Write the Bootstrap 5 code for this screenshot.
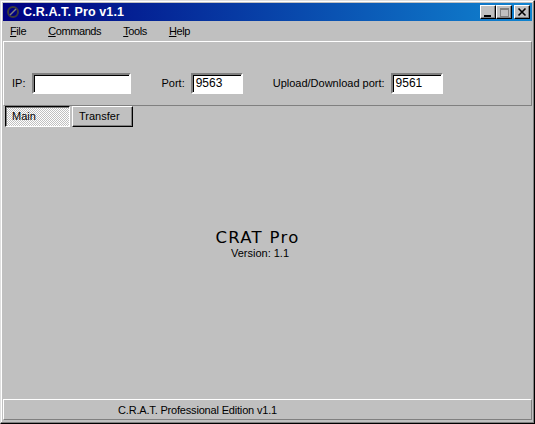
<!DOCTYPE html>
<html lang="en">
<head>
    <meta charset="UTF-8">
    <meta name="viewport" content="width=device-width, initial-scale=1.0">
    <title>C.R.A.T. Pro v1.1</title>
    <link href="https://cdn.jsdelivr.net/npm/bootstrap@5.3.2/dist/css/bootstrap.min.css" rel="stylesheet">
    <style>
        html, body { height: 100%; overflow: hidden; }
        body { background: #c0c0c0; font-family: "Liberation Sans", Arial, sans-serif; font-size: 11px; line-height: 13px; color: #000; }
        .win-frame { width: 535px; height: 424px; padding: 2px 2px 3px 2px; border-style: solid; border-width: 1px; border-color: #dfdfdf #000 #000 #dfdfdf; box-shadow: inset -1px -1px 0 #808080, inset 1px 1px 0 #fff; }
        .win-title { height: 18px; padding-left: 3px; padding-right: 2px; background: linear-gradient(90deg, #000080, #1084d0); color: #fff; font-size: 12.5px; font-weight: 700; letter-spacing: .1px; }
        .win-title svg { margin-right: 3px; }
        .cap-btn { width: 16px; height: 14px; padding: 0; background: #c0c0c0; border: 1px solid; border-color: #fff #000 #000 #fff; box-shadow: inset -1px -1px 0 #808080; }
        .cap-btn svg { display: block; margin: 0 auto; }
        .cap-gap { margin-left: 2px; }
        .menu-row { height: 20px; padding-left: 7px; gap: 22px; font-size: 11px; letter-spacing: -.4px; }
        .menu-row u { text-underline-offset: 1px; }
        .menu-item { padding-top: 1px; }
        .conn-panel { height: 65px; padding: 31px 0 0 8px; border: 1px solid; border-color: #fff #808080 #808080 #fff; font-size: 11px; }
        .field-box { height: 21px; padding: 1px 0 0 3px; background: #fff; border: 2px solid; border-color: #808080 #fff #fff #808080; box-shadow: inset 1px 1px 0 #000; font-size: 12px; line-height: 15px; }
        .box-ip { width: 99px; margin-left: 7px; margin-right: 30px; }
        .box-port { width: 52px; margin-left: 6px; margin-right: 30px; }
        .box-up { width: 52px; margin-left: 6px; }
        .tab-row { height: 22px; padding-left: 2px; gap: 2px; font-size: 11px; }
        .tab-btn { height: 21px; padding: 3px 0 0 6px; border: 1px solid; border-color: #fff #000 #000 #fff; box-shadow: inset -1px -1px 0 #808080; }
        .tab-on { width: 65px; border-color: #000 #fff #fff #000; box-shadow: inset 1px 1px 0 #808080; background-color: #e8e8e8; background-image: conic-gradient(#c0c0c0 25%, #fff 0 50%, #c0c0c0 0 75%, #fff 0); background-size: 2px 2px; }
        .tab-off { width: 61px; }
        .about-area { padding-top: 102px; padding-right: 20px; }
        .about-name { font-family: "DejaVu Sans", sans-serif; font-size: 16.5px; line-height: 16px; letter-spacing: 1.3px; }
        .about-ver { margin-top: 1px; padding-left: 5px; font-size: 11px; line-height: 12px; }
        .status-row { height: 21px; padding: 4px 0 0 114px; border: 1px solid; border-color: #fff #808080 #808080 #fff; font-size: 11px; letter-spacing: -.18px; }
    </style>
</head>
<body>
    <div class="win-frame d-flex flex-column">
        <div class="win-title d-flex align-items-center flex-shrink-0">
            <svg width="14" height="14" viewBox="0 0 14 14">
                <circle cx="7" cy="7" r="5" fill="#000080" stroke="#3c3c3c" stroke-width="2"/>
                <path d="M4 10 L10 4" stroke="#808080" stroke-width="1.5"/>
            </svg>
            <span>C.R.A.T. Pro v1.1</span>
            <div class="ms-auto d-flex">
                <button class="cap-btn" type="button" aria-label="Minimize"><svg width="14" height="12" viewBox="0 0 14 12"><rect x="3" y="9" width="7" height="2" fill="#000"/></svg></button>
                <button class="cap-btn" type="button" aria-label="Maximize"><svg width="14" height="12" viewBox="0 0 14 12"><path d="M3 2h9v9H3z M4 4v6h7V4z" fill="#808080" fill-rule="evenodd"/></svg></button>
                <button class="cap-btn cap-gap" type="button" aria-label="Close"><svg width="14" height="12" viewBox="0 0 14 12"><path d="M3.5 2.5 L10.5 9.5 M10.5 2.5 L3.5 9.5" stroke="#000" stroke-width="1.6"/></svg></button>
            </div>
        </div>

        <div class="menu-row d-flex align-items-center flex-shrink-0">
            <span class="menu-item"><u>F</u>ile</span>
            <span class="menu-item"><u>C</u>ommands</span>
            <span class="menu-item"><u>T</u>ools</span>
            <span class="menu-item"><u>H</u>elp</span>
        </div>

        <div class="conn-panel d-flex align-items-start flex-shrink-0">
            <span class="mt-1">IP:</span>
            <div class="field-box box-ip"></div>
            <span class="mt-1">Port:</span>
            <div class="field-box box-port">9563</div>
            <span class="mt-1">Upload/Download port:</span>
            <div class="field-box box-up">9561</div>
        </div>

        <div class="tab-row d-flex flex-shrink-0">
            <div class="tab-btn tab-on">Main</div>
            <div class="tab-btn tab-off">Transfer</div>
        </div>

        <div class="about-area flex-grow-1 text-center">
            <div class="about-name">CRAT Pro</div>
            <div class="about-ver">Version: 1.1</div>
        </div>

        <div class="status-row flex-shrink-0">C.R.A.T. Professional Edition v1.1</div>
    </div>
    <script src="https://cdn.jsdelivr.net/npm/bootstrap@5.3.2/dist/js/bootstrap.bundle.min.js"></script>
</body>
</html>
